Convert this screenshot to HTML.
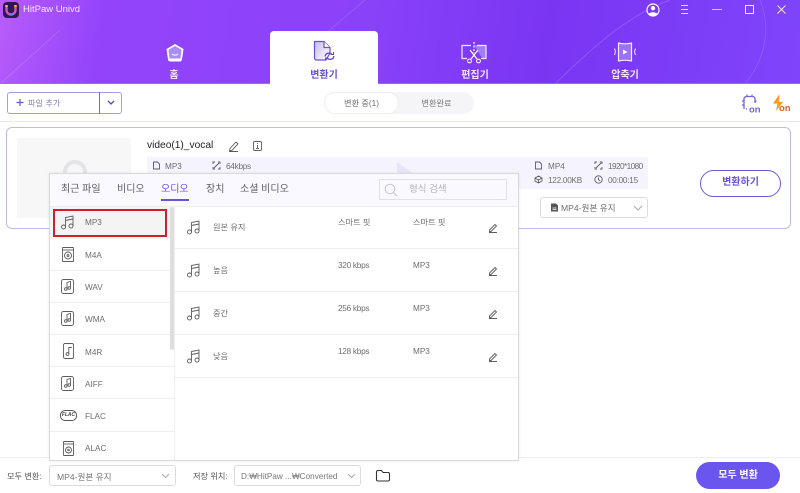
<!DOCTYPE html>
<html lang="ko"><head><meta charset="utf-8"><title>HitPaw Univd</title>
<style>
*{box-sizing:border-box;margin:0;padding:0}
html,body{width:800px;height:493px;overflow:hidden;background:#fff}
body{position:relative;font-family:"Liberation Sans","Noto Sans CJK KR",sans-serif;color:#555;filter:blur(.3px)}
.a{position:absolute;white-space:nowrap}
svg{position:absolute;overflow:visible}
.t{font-size:8.2px;line-height:12px;color:#6e6e6e;margin-top:1px}
.n{letter-spacing:-.25px}
.sep{position:absolute;height:1px;background:#eeeeee}
.ic{fill:none;stroke:#5c5c5c;stroke-width:.9}
.lb{top:68px;width:60px;text-align:center;font-size:10px;line-height:15px;font-weight:700;color:#f2e8ff}
.tb{top:183px;font-size:10px;line-height:14px;color:#5e5e5e}
</style></head><body>

<!-- header -->
<div class="a" style="left:0;top:0;width:800px;height:84px;background:linear-gradient(100deg,#b85cfb 0%,#9344fb 13%,#8a42f9 45%,#7a35f3 68%,#7f45fb 100%)"></div>
<svg style="left:0;top:0" width="800" height="84" viewBox="0 0 800 84">
<path d="M0 84L60 30" stroke="#fff" stroke-opacity=".13" fill="none"/>
<path d="M318 40L365 0" stroke="#fff" stroke-opacity=".12" fill="none"/>
<path d="M555 84C600 40 630 15 670 0" stroke="#fff" stroke-opacity=".16" fill="none"/>
<path d="M760 0C770 25 768 55 745 84" stroke="#fff" stroke-opacity=".12" fill="none"/>
</svg>
<div class="a" style="left:0;top:83px;width:800px;height:1px;background:#9a68f5"></div>

<!-- logo -->
<div class="a" style="left:3px;top:2px;width:16px;height:16px;border-radius:4px;background:#2a1a50"></div>
<svg style="left:3px;top:2px" width="16" height="16" viewBox="0 0 16 16"><path d="M3.500 3v5a4.500 4.500 0 0 0 9 0V3" fill="none" stroke="#e050c0" stroke-width="2.400"/><path d="M3.500 3v2M12.500 3v2" stroke="#ffb040" stroke-width="2.400"/><path d="M6 12.500h4" stroke="#4f8bff" stroke-width="2"/></svg>
<div class="a" style="left:23px;top:3px;font-size:9.500px;line-height:14px;color:#f4e9ff">HitPaw Univd</div>

<!-- window icons -->
<svg style="left:645px;top:2px" width="16" height="16" viewBox="0 0 16 16"><circle cx="8" cy="8" r="6" fill="#7a38f0" stroke="#fff" stroke-width="1.200"/><circle cx="8" cy="6.200" r="2.200" fill="#fff"/><path d="M3.600 12c1-2.400 7.800-2.400 8.800 0a6 6 0 0 1-8.800 0z" fill="#fff"/></svg>
<svg style="left:680px;top:4px" width="10" height="11" viewBox="0 0 10 11"><path d="M1 1.500h7M1 5.500h7M1 9.500h7" stroke="#e6d6ff" stroke-width="1"/></svg>
<div class="a" style="left:712px;top:9px;width:10px;height:1px;background:#d9c6ff"></div>
<div class="a" style="left:745px;top:5px;width:9px;height:9px;border:1px solid #efe6ff"></div>
<svg style="left:777px;top:5px" width="9" height="9" viewBox="0 0 9 9"><path d="M.5.500l8 8M8.500.500l-8 8" stroke="#efe6ff" stroke-width="1"/></svg>

<!-- tabs -->
<div class="a" style="left:270px;top:31px;width:108px;height:54px;background:#fff;border-radius:4px 4px 0 0"></div>
<svg style="left:165px;top:43px" width="20" height="20" viewBox="0 0 20 20"><path d="M10 1l8.500 5-1.500 10.500a2.500 2.500 0 0 1-2.500 2h-9a2.500 2.500 0 0 1-2.500-2L1.500 6z" fill="#fff"/><path d="M10 3l6.500 3.800-1 8.700H4.500l-1-8.700z" fill="#a98cf8"/><path d="M7 11c1.500 1.500 4.500 1.500 6 0" stroke="#fff" fill="none"/></svg>
<div class="a lb" style="left:144px">홈</div>

<svg style="left:312px;top:40px" width="26" height="24" viewBox="0 0 26 24"><defs><linearGradient id="g1" x1="0" y1="0" x2="1" y2="1"><stop offset="0" stop-color="#c6bafb"/><stop offset="1" stop-color="#fff"/></linearGradient></defs><path d="M2.500 1.500h9.500l6 6v5.500l-4 7H4.500a2 2 0 0 1-2-2z" fill="url(#g1)" stroke="#6a4fd8" stroke-width="1.200" stroke-linejoin="round"/><path d="M12 1.500v6h6" fill="#fff" stroke="#6a4fd8" stroke-width="1.200"/><path d="M13 16.500a4 4 0 0 1 7-2M22 16a4 4 0 0 1-7 2" fill="none" stroke="#5d45cc" stroke-width="1.200"/><path d="M18.500 14.500h3v-2.500M16.500 18h-3v2.500" fill="none" stroke="#5d45cc" stroke-width="1"/></svg>
<div class="a lb" style="left:294px;color:#6c52d6">변환기</div>

<svg style="left:460px;top:41px" width="28" height="24" viewBox="0 0 28 24"><path d="M14 4h12v13h-4" fill="#a07ef8"/><path d="M11 4.500H2v13h5M17 4.500h9v13h-5" fill="none" stroke="#f2eaff" stroke-width="1.200"/><path d="M14 1v11" stroke="#fff" stroke-width="1.200" stroke-dasharray="2 1.500"/><path d="M10 9l7 9M18 9l-7 9" stroke="#fff" stroke-width="1.200"/><circle cx="9.500" cy="20" r="1.900" fill="none" stroke="#fff"/><circle cx="18.500" cy="20" r="1.900" fill="none" stroke="#fff"/></svg>
<div class="a lb" style="left:445px">편집기</div>

<svg style="left:613px;top:41px" width="24" height="22" viewBox="0 0 24 22"><path d="M5.500 2c4 1 9 1 13 0v18c-4-1-9-1-13 0z" fill="#9a72f7" stroke="#f2eaff" stroke-width="1.200" stroke-linejoin="round"/><path d="M10 8.500l4.500 2.500L10 13.500z" fill="#fff"/><path d="M1.500 7.500c1 2 1 4.500 0 6.500M22.500 7.500c-1 2-1 4.500 0 6.500" fill="none" stroke="#f2eaff"/></svg>
<div class="a lb" style="left:595px">압축기</div>

<!-- toolbar -->
<div class="a" style="left:7px;top:92px;width:115px;height:22px;border:1px solid #a89be6;border-radius:3px"></div>
<div class="a" style="left:99px;top:92px;width:1px;height:22px;background:#7a68d0"></div>
<svg style="left:15px;top:98px" width="10" height="10" viewBox="0 0 10 10"><path d="M5 1v7M1.500 4.500h7" stroke="#6a55cf" stroke-width="1.200"/></svg>
<div class="a t" style="left:28px;top:97px;color:#8880b0">파일 추가</div>
<svg style="left:106px;top:100px" width="10" height="6" viewBox="0 0 10 6"><path d="M2 1l3 3 3-3" fill="none" stroke="#5a48b8" stroke-width="1.300"/></svg>

<div class="a" style="left:324px;top:92px;width:150px;height:22px;background:#f5f5f7;border-radius:11px"></div>
<div class="a" style="left:324px;top:92px;width:75px;height:22px;background:#fff;border:1px solid #eeeeee;border-radius:11px"></div>
<div class="a t" style="left:324px;top:97px;width:75px;text-align:center">변환 중(1)</div>
<div class="a t" style="left:399px;top:97px;width:75px;text-align:center;color:#777">변환완료</div>

<svg style="left:741px;top:94px" width="22" height="20" viewBox="0 0 22 20"><path d="M3 15V5a2.500 2.500 0 0 1 2.500-2.500h6A2.500 2.500 0 0 1 14 5v4" fill="none" stroke="#6f62d8" stroke-width="1.300"/><path d="M6 2.500V.5M11 2.500V.5M3 7H1M3 11H1M6 15H5M14 7h1.500" stroke="#6f62d8" stroke-width="1.200"/><text x="8" y="18.500" font-size="9.500" font-weight="700" fill="#6f62d8" font-family="Liberation Sans">on</text></svg>
<svg style="left:771px;top:93px" width="20" height="20" viewBox="0 0 20 20"><path d="M8.500 1L2 10.500h4.500L5 18l7-9H8z" fill="#f79a1e"/><text x="8" y="18" font-size="9.500" font-weight="700" fill="#e8621c" font-family="Liberation Sans">on</text></svg>

<div class="a" style="left:0;top:121px;width:800px;height:1px;background:#e8e8e8"></div>

<!-- card -->
<div class="a" style="left:6px;top:127px;width:785px;height:102px;border:1px solid #c3b9e9;border-radius:6px"></div>
<div class="a" style="left:17px;top:138px;width:114px;height:80px;background:#f7f7f8"></div>
<svg style="left:60px;top:160px" width="30" height="16" viewBox="0 0 30 16"><path d="M5 16V12a10 10 0 0 1 20 0v4" fill="none" stroke="#e4e4e6" stroke-width="4"/></svg>
<div class="a" style="left:147px;top:138px;font-size:10.200px;line-height:15px;color:#222">video(1)_vocal</div>
<svg style="left:228px;top:140px" width="12" height="12" viewBox="0 0 12 12"><path d="M2 8.500L8 2l2 1.800-6 6.500-2.300.4zM1 11.500h9" class="ic"/></svg>
<svg style="left:252px;top:140px" width="12" height="12" viewBox="0 0 12 12"><rect x="1.500" y="1.500" width="8" height="9" rx="1.500" class="ic"/><path d="M5.500 5v3.500M5.500 3v1" class="ic"/><path d="M4 8.500h3" class="ic"/></svg>

<div class="a" style="left:147px;top:157px;width:501px;height:32px;background:#f5f4fe"></div>
<svg style="left:380px;top:157px" width="40" height="16" viewBox="0 0 40 16"><path d="M0 16h17V5l16 11z" fill="#e8e4fb"/></svg>
<svg style="left:152px;top:161px" width="9" height="9" viewBox="0 0 9 9"><path d="M1.500 1h4l2 2v5h-6z" class="ic"/></svg>
<div class="a t" style="left:165px;top:160px">MP3</div>
<svg style="left:212px;top:161px" width="9" height="9" viewBox="0 0 9 9"><path d="M1 3V1h2M6 1h2v2M8 6v2H6M3 8H1V6M2 7l5-5" class="ic"/></svg>
<div class="a t n" style="left:226px;top:160px">64kbps</div>

<svg style="left:534px;top:161px" width="9" height="9" viewBox="0 0 9 9"><path d="M1.500 1h4l2 2v5h-6z" class="ic"/></svg>
<div class="a t" style="left:548px;top:160px">MP4</div>
<svg style="left:594px;top:161px" width="9" height="9" viewBox="0 0 9 9"><path d="M1 3V1h2M6 1h2v2M8 6v2H6M3 8H1V6M2 7l5-5" class="ic"/></svg>
<div class="a t" style="left:608px;top:160px;letter-spacing:-.55px">1920*1080</div>
<svg style="left:534px;top:175px" width="9" height="9" viewBox="0 0 9 9"><path d="M4.500 1L8 3v3L4.500 8 1 6V3zM1 3l3.500 2L8 3M4.500 5v3" class="ic" stroke-width=".8"/></svg>
<div class="a t n" style="left:548px;top:174px">122.00KB</div>
<svg style="left:594px;top:175px" width="9" height="9" viewBox="0 0 9 9"><circle cx="4.500" cy="4.500" r="3.700" class="ic"/><path d="M4.500 2.500v2.200l1.500 1" class="ic"/></svg>
<div class="a t n" style="left:608px;top:174px">00:00:15</div>

<div class="a" style="left:540px;top:197px;width:108px;height:21px;border:1px solid #dcdcdc;border-radius:3px"></div>
<svg style="left:550px;top:203px" width="9" height="9" viewBox="0 0 9 9"><path d="M1 .5h5l2 2v6H1z" fill="#555"/><path d="M2.500 5h4M2.500 6.500h4" stroke="#fff" stroke-width=".7"/></svg>
<div class="a t" style="left:561px;top:201px;font-size:8.600px">MP4-원본 유지</div>
<svg style="left:633px;top:205px" width="10" height="6" viewBox="0 0 10 6"><path d="M1 1l4 4 4-4" fill="none" stroke="#aaa"/></svg>

<div class="a" style="left:700px;top:170px;width:81px;height:27px;border:1.500px solid #6e58d8;border-radius:14px;text-align:center;font-size:10px;line-height:24px;color:#6c52d6;font-weight:700">변환하기</div>

<!-- bottom bar -->
<div class="a" style="left:0;top:457px;width:800px;height:1px;background:#eeeeee"></div>
<div class="a t" style="left:7px;top:470px;color:#555">모두 변환:</div>
<div class="a" style="left:49px;top:465px;width:127px;height:21px;border:1px solid #dcdcdc;border-radius:3px"></div>
<div class="a t" style="left:57px;top:470px;color:#777;font-size:8.600px">MP4-원본 유지</div>
<svg style="left:161px;top:473px" width="10" height="6" viewBox="0 0 10 6"><path d="M1 1l3.500 3.500L8 1" fill="none" stroke="#aaa"/></svg>
<div class="a t" style="left:193px;top:470px;color:#555">저장 위치:</div>
<div class="a" style="left:234px;top:465px;width:127px;height:21px;border:1px solid #dcdcdc;border-radius:3px"></div>
<div class="a t" style="left:241px;top:470px;color:#777">D:₩HitPaw ...₩Converted</div>
<svg style="left:347px;top:473px" width="10" height="6" viewBox="0 0 10 6"><path d="M1 1l3.500 3.500L8 1" fill="none" stroke="#aaa"/></svg>
<svg style="left:375px;top:469px" width="16" height="14" viewBox="0 0 16 14"><path d="M1.500 3a1.500 1.500 0 0 1 1.500-1.500h3.500L8 3.500h5a1.500 1.500 0 0 1 1.500 1.500v5.500A1.500 1.500 0 0 1 13 12H3a1.500 1.500 0 0 1-1.500-1.500z" fill="none" stroke="#333" stroke-width="1.100"/></svg>
<div class="a" style="left:696px;top:462px;width:84px;height:27px;background:#6a55ee;border-radius:14px;text-align:center;font-size:10px;line-height:27px;color:#fff;font-weight:700">모두 변환</div>

<!-- popup -->
<div class="a" style="left:49px;top:173px;width:470px;height:288px;background:#fff;border:1px solid #d9d9d9;box-shadow:0 0 3px rgba(0,0,0,.08)"></div>
<div class="a" style="left:50px;top:174px;width:468px;height:32px;background:#faf9ff"></div>
<div class="a" style="left:50px;top:206px;width:468px;height:1px;background:#eeeeee"></div>
<div class="a tb" style="left:61px">최근 파일</div>
<div class="a tb" style="left:117px">비디오</div>
<div class="a tb" style="left:161px;color:#6c52d6">오디오</div>
<div class="a" style="left:161px;top:199px;width:28px;height:2px;background:#6c52d6"></div>
<div class="a tb" style="left:206px">장치</div>
<div class="a tb" style="left:240px">소셜 비디오</div>

<div class="a" style="left:379px;top:179px;width:128px;height:21px;border:1px solid #e2e0ec;background:#faf9ff"></div>
<svg style="left:384px;top:183px" width="14" height="14" viewBox="0 0 14 14"><circle cx="6" cy="6" r="4.800" fill="none" stroke="#c9c9cf"/><path d="M9.500 9.500l3.500 3.500" stroke="#c9c9cf"/></svg>
<div class="a t" style="left:409px;top:183px;color:#b4b4b8;font-size:9.500px">형식 검색</div>

<!-- list -->
<div class="a" style="left:174px;top:207px;width:1px;height:253px;background:#eeeeee"></div>
<div class="a" style="left:170px;top:207px;width:4px;height:143px;background:#dedede;border-radius:2px"></div>
<div class="a" style="left:50px;top:207px;width:120px;height:32px;background:#f4f4f4"></div>
<div class="a" style="left:53px;top:209px;width:114px;height:28px;border:2px solid #cf2027"></div>
<div class="sep" style="left:50px;top:270px;width:120px"></div>
<div class="sep" style="left:50px;top:302px;width:120px"></div>
<div class="sep" style="left:50px;top:334px;width:120px"></div>
<div class="sep" style="left:50px;top:366px;width:124px"></div>
<div class="sep" style="left:50px;top:398px;width:124px"></div>
<div class="sep" style="left:50px;top:431px;width:124px"></div>

<svg style="left:61px;top:215px" width="14" height="15" viewBox="0 0 14 15"><g class="ic"><circle cx="2.500" cy="12" r="2"/><circle cx="10" cy="11" r="2"/><path d="M4.500 12V2.500l7.500-1.500v10M4.500 5.500l7.500-1.500"/></g></svg>
<div class="a t" style="left:85px;top:216px">MP3</div>

<svg style="left:62px;top:247px" width="12" height="15" viewBox="0 0 12 15"><g class="ic"><rect x=".5" y=".5" width="11" height="14" rx=".5"/><path d="M.5 3h11"/><circle cx="6" cy="8.500" r="3.500"/><circle cx="6" cy="8.500" r="1"/></g></svg>
<div class="a t" style="left:85px;top:249px">M4A</div>

<svg style="left:61px;top:279px" width="14" height="15" viewBox="0 0 14 15"><g class="ic"><rect x=".5" y=".5" width="12" height="14" rx="2"/><path d="M6 10V3.500l3.500-1v6"/><circle cx="4.800" cy="10" r="1.300"/><circle cx="8.300" cy="9" r="1.300"/></g></svg>
<div class="a t" style="left:85px;top:281px">WAV</div>

<svg style="left:61px;top:311px" width="14" height="15" viewBox="0 0 14 15"><g class="ic"><rect x=".5" y=".5" width="12" height="14" rx="2"/><path d="M6 10V3.500l3.500-1v6"/><circle cx="4.800" cy="10" r="1.300"/><circle cx="8.300" cy="9" r="1.300"/></g></svg>
<div class="a t" style="left:85px;top:313px">WMA</div>

<svg style="left:63px;top:343px" width="12" height="16" viewBox="0 0 12 16"><g class="ic"><rect x=".5" y=".5" width="10" height="15" rx="1.500"/><path d="M5.800 11V4.500h3"/><circle cx="4.500" cy="11" r="1.400"/></g></svg>
<div class="a t" style="left:85px;top:346px">M4R</div>

<svg style="left:61px;top:376px" width="14" height="15" viewBox="0 0 14 15"><g class="ic"><rect x=".5" y=".5" width="12" height="14" rx="2"/><path d="M6 10V3.500l3.500-1v6"/><circle cx="4.800" cy="10" r="1.300"/><circle cx="8.300" cy="9" r="1.300"/></g></svg>
<div class="a t" style="left:85px;top:378px">AIFF</div>

<div class="a" style="left:60px;top:410px;width:17px;height:11px;border:1px solid #555;border-radius:5px;font-size:5px;line-height:9px;text-align:center;font-weight:700;font-style:italic;color:#444">FLAC</div>
<div class="a t" style="left:85px;top:410px">FLAC</div>

<svg style="left:63px;top:441px" width="12" height="15" viewBox="0 0 12 15"><g class="ic"><rect x=".5" y=".5" width="10" height="14" rx=".5"/><path d="M.5 3h10"/><circle cx="5.500" cy="9" r="3"/><circle cx="5.500" cy="9" r=".8"/></g></svg>
<div class="a t" style="left:85px;top:442px">ALAC</div>

<!-- quality rows -->
<div class="sep" style="left:175px;top:248px;width:343px"></div>
<div class="sep" style="left:175px;top:291px;width:343px"></div>
<div class="sep" style="left:175px;top:334px;width:343px"></div>
<div class="sep" style="left:175px;top:377px;width:343px"></div>

<svg style="left:187px;top:220px" width="14" height="15" viewBox="0 0 14 15"><g class="ic"><circle cx="2.500" cy="12" r="2"/><circle cx="10" cy="11" r="2"/><path d="M4.500 12V2.500l7.500-1.500v10M4.500 5.500l7.500-1.500"/></g></svg>
<div class="a t" style="left:213px;top:221px">원본 유지</div>
<div class="a t" style="left:338px;top:216px">스마트 핏</div>
<div class="a t" style="left:413px;top:216px">스마트 핏</div>
<svg style="left:488px;top:223px" width="10" height="10" viewBox="0 0 10 10"><path d="M1.500 7L7 1.500l1.500 1.500L3 8.500H1.500zM1 9.500h8" class="ic" stroke-width=".9"/></svg>

<svg style="left:187px;top:263px" width="14" height="15" viewBox="0 0 14 15"><g class="ic"><circle cx="2.500" cy="12" r="2"/><circle cx="10" cy="11" r="2"/><path d="M4.500 12V2.500l7.500-1.500v10M4.500 5.500l7.500-1.500"/></g></svg>
<div class="a t" style="left:213px;top:264px">높음</div>
<div class="a t n" style="left:338px;top:259px">320 kbps</div>
<div class="a t" style="left:413px;top:259px">MP3</div>
<svg style="left:488px;top:266px" width="10" height="10" viewBox="0 0 10 10"><path d="M1.500 7L7 1.500l1.500 1.500L3 8.500H1.500zM1 9.500h8" class="ic" stroke-width=".9"/></svg>

<svg style="left:187px;top:306px" width="14" height="15" viewBox="0 0 14 15"><g class="ic"><circle cx="2.500" cy="12" r="2"/><circle cx="10" cy="11" r="2"/><path d="M4.500 12V2.500l7.500-1.500v10M4.500 5.500l7.500-1.500"/></g></svg>
<div class="a t" style="left:213px;top:307px">중간</div>
<div class="a t n" style="left:338px;top:302px">256 kbps</div>
<div class="a t" style="left:413px;top:302px">MP3</div>
<svg style="left:488px;top:309px" width="10" height="10" viewBox="0 0 10 10"><path d="M1.500 7L7 1.500l1.500 1.500L3 8.500H1.500zM1 9.500h8" class="ic" stroke-width=".9"/></svg>

<svg style="left:187px;top:349px" width="14" height="15" viewBox="0 0 14 15"><g class="ic"><circle cx="2.500" cy="12" r="2"/><circle cx="10" cy="11" r="2"/><path d="M4.500 12V2.500l7.500-1.500v10M4.500 5.500l7.500-1.500"/></g></svg>
<div class="a t" style="left:213px;top:350px">낮음</div>
<div class="a t n" style="left:338px;top:345px">128 kbps</div>
<div class="a t" style="left:413px;top:345px">MP3</div>
<svg style="left:488px;top:352px" width="10" height="10" viewBox="0 0 10 10"><path d="M1.500 7L7 1.500l1.500 1.500L3 8.500H1.500zM1 9.500h8" class="ic" stroke-width=".9"/></svg>

</body></html>
